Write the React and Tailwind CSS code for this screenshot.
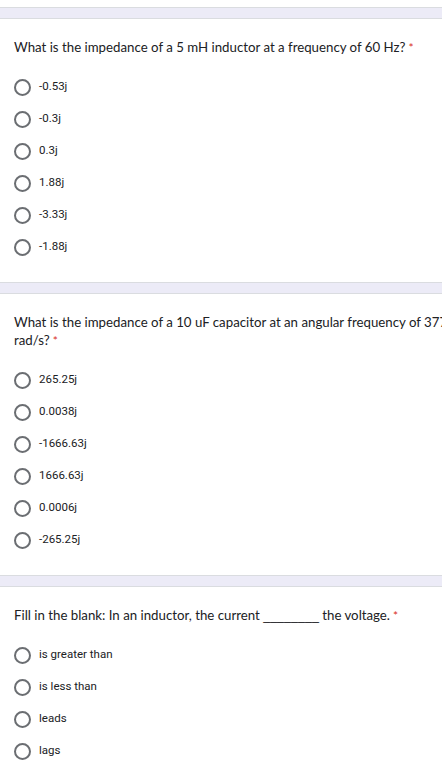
import React from "react";

const Band = () => (
  <div className="h-[12px] w-full border-y border-[#dadce0] bg-[#ecebf7]" />
);

const Radio = ({ label }) => (
  <div className="flex h-[32px] items-center">
    <div className="h-[17px] w-[17px] shrink-0 rounded-full border-2 border-[#6b6e72]" />
    <span className="ml-[8px] text-[11.5px] text-[#202124]" style={{ fontFamily: "Roboto, Arial, sans-serif" }}>
      {label}
    </span>
  </div>
);

const Question = ({ children, options }) => (
  <div className="pl-[14px]">
    <div className="pt-[19px] text-[13.25px] leading-[18px] whitespace-nowrap text-[#202124]" style={{ fontFamily: "Lato, sans-serif" }}>
      {children}
      <span className="text-[#d93025] text-[12px] leading-none"> *</span>
    </div>
    <div className="mt-[15px] flex flex-col">
      {options.map((o) => (
        <Radio key={o} label={o} />
      ))}
    </div>
  </div>
);

export default function App() {
  return (
    <div className="w-[442px] h-[779px] overflow-hidden bg-white pt-[7px]">
      <Band />
      <Question options={["-0.53j", "-0.3j", "0.3j", "1.88j", "-3.33j", "-1.88j"]}>
        What is the impedance of a 5 mH inductor at a frequency of 60 Hz?
      </Question>
      <div className="h-[19px]" />
      <Band />
      <Question options={["265.25j", "0.0038j", "-1666.63j", "1666.63j", "0.0006j", "-265.25j"]}>
        What is the impedance of a 10 uF capacitor at an angular frequency of 377
        <br />
        rad/s?
      </Question>
      <div className="h-[19px]" />
      <Band />
      <Question options={["is greater than", "is less than", "leads", "lags"]}>
        Fill in the blank: In an inductor, the current{" "}
        <span style={{ fontFamily: "'Liberation Sans', Arial, sans-serif" }} className="text-[12.5px] leading-none">________</span>{" "}
        the voltage.
      </Question>
    </div>
  );
}
